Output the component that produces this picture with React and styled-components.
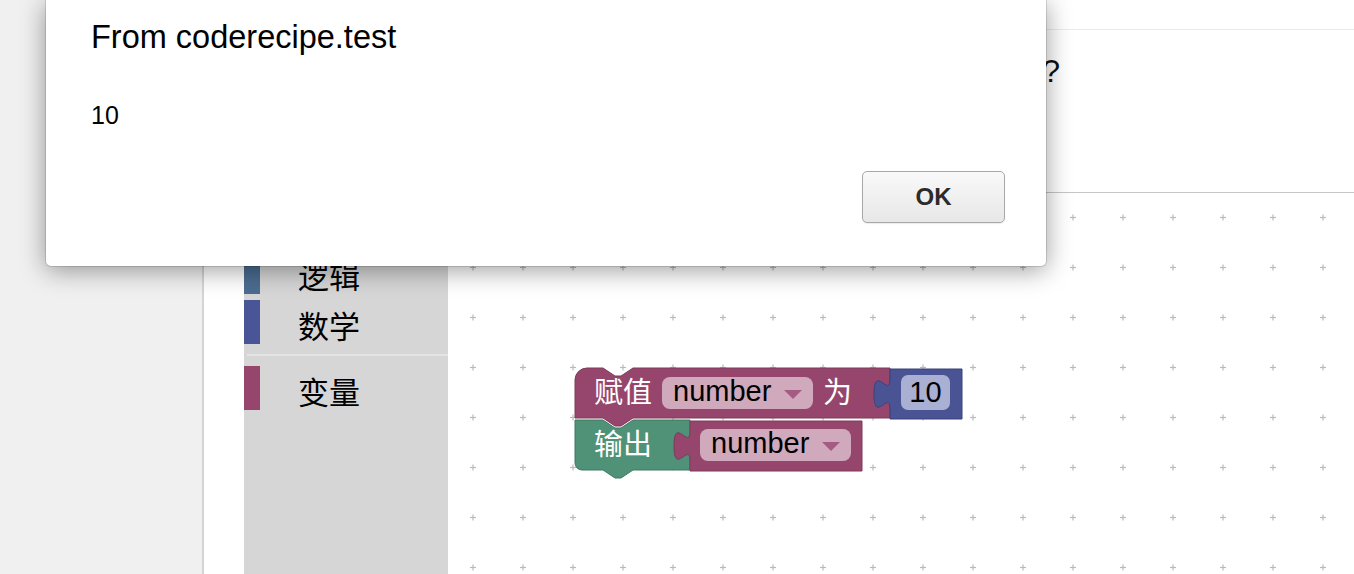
import React from 'react';
import styled, { createGlobalStyle } from 'styled-components';

const GlobalStyle = createGlobalStyle`
    html, body {
        margin: 0;
        padding: 0;
        height: 100%;
        overflow: hidden;
    }
    body {
        font-family: "Liberation Sans", "Noto Sans CJK SC", sans-serif;
        background: #ffffff;
    }
    #root {
        height: 100%;
    }
`;

const categories = [
    { name: '逻辑', color: '#4b6c91' },
    { name: '数学', color: '#4a5597' },
    { separator: true },
    { name: '变量', color: '#96466c' },
];

const BLOCK_TEXT = '"Liberation Sans", "Noto Sans CJK SC", sans-serif';

export default function App() {
    return (
        <Page>
            <GlobalStyle />
            <SideNav />
            <Main>
                <TopBar />
                <Question>
                    <QuestionText>下面这段代码运行后会弹出什么?</QuestionText>
                </Question>
                <Editor>
                    <Toolbox>
                        {categories.map((c, i) =>
                            c.separator ? (
                                <Separator key={i} />
                            ) : (
                                <Category key={i}>
                                    <CategoryBar $color={c.color} />
                                    <CategoryLabel>{c.name}</CategoryLabel>
                                </Category>
                            )
                        )}
                    </Toolbox>
                    <Workspace>
                        <Grid>
                            <defs>
                                <pattern id="grid" width="50" height="50" patternUnits="userSpaceOnUse">
                                    <line x1="22" y1="24.5" x2="28" y2="24.5" stroke="#b9b9b9" strokeWidth="1.2" />
                                    <line x1="25" y1="21.5" x2="25" y2="27.5" stroke="#b9b9b9" strokeWidth="1.2" />
                                </pattern>
                            </defs>
                            <rect width="100%" height="100%" fill="url(#grid)" />
                        </Grid>
                        <BlockStack width="410" height="130" viewBox="0 0 410 130">
                            {/* 赋值 block */}
                            <path
                                d="M 10,20 A 12 12 0 0 1 22,8 H 38 l 12,8 h 6 l 12,-8 H 325 V 58 H 68 l -12,8 h -6 l -12,-8 H 10 Z"
                                fill="#96466c"
                                stroke="#7d3a5a"
                                strokeWidth="1"
                            />
                            <text x="29" y="43" fill="#fff" fontSize="29" fontFamily={BLOCK_TEXT}>赋值</text>
                            <rect x="97" y="17" width="151" height="32" rx="8" fill="#d0a9bd" />
                            <text x="108" y="41" fill="#000" fontSize="29" fontFamily={BLOCK_TEXT}>number</text>
                            <path d="M 219,30 H 237 L 228,39 Z" fill="#a45c82" />
                            <text x="258" y="43" fill="#fff" fontSize="29" fontFamily={BLOCK_TEXT}>为</text>

                            {/* number block */}
                            <path
                                d="M 325,9 V 19 c 0,20 -16,-16 -16,15 s 16,-5 16,15 V 59 H 397 V 9 Z"
                                fill="#4a5394"
                                stroke="#3b4379"
                                strokeWidth="1"
                            />
                            <rect x="336" y="15" width="49" height="35" rx="7" fill="#aab0d3" />
                            <text x="360.5" y="42" fill="#000" fontSize="29" textAnchor="middle" fontFamily={BLOCK_TEXT}>10</text>

                            {/* 输出 block */}
                            <path
                                d="M 10,60 H 38 l 12,8 h 6 l 12,-8 H 125 V 110 H 68 l -12,8 h -6 l -12,-8 H 17 A 7 7 0 0 1 10,103 Z"
                                fill="#4f9277"
                                stroke="#3f7862"
                                strokeWidth="1"
                            />
                            <text x="29" y="95" fill="#fff" fontSize="29" fontFamily={BLOCK_TEXT}>输出</text>

                            {/* variable getter */}
                            <path
                                d="M 125,61 V 71 c 0,20 -16,-16 -16,15 s 16,-5 16,15 V 111 H 297 V 61 Z"
                                fill="#96466c"
                                stroke="#7d3a5a"
                                strokeWidth="1"
                            />
                            <rect x="135" y="69" width="151" height="32" rx="8" fill="#d0a9bd" />
                            <text x="146" y="93" fill="#000" fontSize="29" fontFamily={BLOCK_TEXT}>number</text>
                            <path d="M 257,82 H 275 L 266,91 Z" fill="#a45c82" />
                        </BlockStack>
                    </Workspace>
                </Editor>
            </Main>

            <Alert>
                <AlertTitle>From coderecipe.test</AlertTitle>
                <AlertMessage>10</AlertMessage>
                <AlertFooter>
                    <OkButton>OK</OkButton>
                </AlertFooter>
            </Alert>
        </Page>
    );
}

const Page = styled.div`
    display: flex;
    height: 100%;
    width: 100%;
    position: relative;
`;

const SideNav = styled.div`
    width: 202px;
    flex-shrink: 0;
    background: #eff0ef;
    border-right: 2px solid #d4d4d4;
`;

const Main = styled.div`
    flex: 1;
    display: flex;
    flex-direction: column;
    background: #fff;
    min-width: 0;
`;

const TopBar = styled.div`
    height: 29px;
    flex-shrink: 0;
    border-bottom: 1px solid #ececec;
`;

const Question = styled.div`
    height: 137px;
    flex-shrink: 0;
    padding: 25px 294px 0 0;
    text-align: right;
    border-bottom: 1px solid #c6c6c6;
`;

const QuestionText = styled.h2`
    margin: 0;
    font-size: 32px;
    line-height: 32px;
    font-weight: 400;
    color: #111;
    white-space: nowrap;
`;

const Editor = styled.div`
    flex: 1;
    display: flex;
    padding-left: 40px;
    min-height: 0;
`;

const Toolbox = styled.div`
    width: 204px;
    flex-shrink: 0;
    background: #d6d6d6;
    padding-top: 57px;
    box-sizing: border-box;
`;

const Category = styled.div`
    display: flex;
    align-items: center;
    height: 44px;
    margin-bottom: 6px;
`;

const CategoryBar = styled.div`
    width: 16px;
    align-self: stretch;
    background: ${(p) => p.$color};
`;

const CategoryLabel = styled.span`
    margin-left: 38px;
    font-family: "Noto Sans CJK SC", sans-serif;
    font-size: 31px;
    line-height: 44px;
    color: #000;
    padding-top: 6px;
`;

const Separator = styled.div`
    height: 2px;
    margin: 10px 0 10px 3px;
    background: #e4e4e4;
`;

const Workspace = styled.div`
    flex: 1;
    position: relative;
    overflow: hidden;
    background: #fff;
`;

const Grid = styled.svg`
    position: absolute;
    inset: 0;
    width: 100%;
    height: 100%;
`;

const BlockStack = styled.svg`
    position: absolute;
    left: 117px;
    top: 167px;
    overflow: visible;
`;

const Alert = styled.div`
    position: absolute;
    left: 46px;
    top: 0;
    width: 1000px;
    height: 266px;
    box-sizing: border-box;
    padding: 21px 41px 43px 45px;
    background: #fff;
    border-radius: 0 0 5px 5px;
    box-shadow: 0 0 0 1px rgba(0, 0, 0, 0.12), 0 4px 26px rgba(0, 0, 0, 0.4);
    display: flex;
    flex-direction: column;
    font-family: "Liberation Sans", sans-serif;
    color: #000;
`;

const AlertTitle = styled.div`
    font-size: 32.5px;
    line-height: 32px;
`;

const AlertMessage = styled.div`
    margin-top: 50px;
    font-size: 25px;
    line-height: 25px;
`;

const AlertFooter = styled.div`
    margin-top: auto;
    display: flex;
    justify-content: flex-end;
`;

const OkButton = styled.button`
    width: 143px;
    height: 52px;
    border: 1px solid #a8a8a8;
    border-radius: 5px;
    background: linear-gradient(#f9f9f9, #e7e7e7);
    box-shadow: 0 1px 1px rgba(0, 0, 0, 0.08);
    font-family: "Liberation Sans", sans-serif;
    font-weight: 700;
    font-size: 24px;
    color: #2b2b2b;
    padding: 0;
`;
